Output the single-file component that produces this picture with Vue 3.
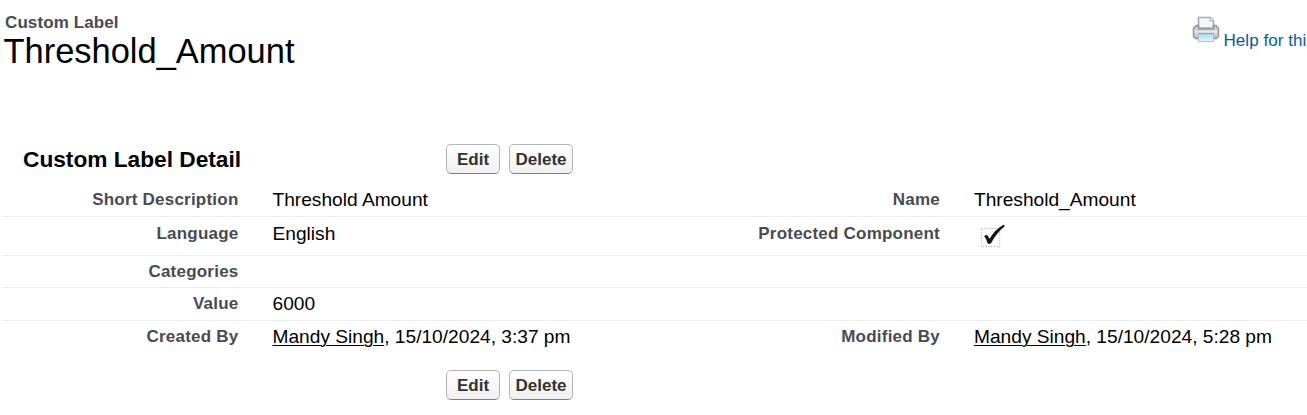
<script setup>
const rows = [
  { id: 'description', label: 'Short Description', value: 'Threshold Amount', label2: 'Name', value2: 'Threshold_Amount' },
  { id: 'language', label: 'Language', value: 'English', label2: 'Protected Component', checked: true },
  { id: 'categories', label: 'Categories' },
  { id: 'amount', label: 'Value', value: '6000' },
  { id: 'created', label: 'Created By', user: 'Mandy Singh', value: ', 15/10/2024, 3:37 pm', label2: 'Modified By', user2: 'Mandy Singh', value2: ', 15/10/2024, 5:28 pm' },
]
</script>

<template>
  <main class="page">
    <header class="header">
      <div>
        <div class="kind">Custom Label</div>
        <h1>Threshold_Amount</h1>
      </div>
      <div class="links">
        <svg class="printer" width="28" height="28" viewBox="0 0 28 28">
          <defs>
            <linearGradient id="paper" x1="0" y1="0" x2="0" y2="1">
              <stop offset="0" stop-color="#a3d6ef" />
              <stop offset="1" stop-color="#e6f8ff" />
            </linearGradient>
            <linearGradient id="body" x1="0" y1="0" x2="0" y2="1">
              <stop offset="0" stop-color="#c0c3c5" />
              <stop offset="0.5" stop-color="#dedfdf" />
              <stop offset="1" stop-color="#b5b7b9" />
            </linearGradient>
          </defs>
          <path d="M6.500 12V1.500h12l3 3V12z" fill="#f2f6fc" stroke="#a3abbd" stroke-width="1.600" />
          <path d="M18 1.500v3.500h3.500" fill="#fff" stroke="#a3abbd" />
          <path d="M4 9.500h2.500v3.500h15v-3.500H24l2.500 3v8l-2 2H3.500l-2-2v-8z" fill="url(#body)" stroke="#96989a" stroke-width="1.500" />
          <path d="M3 15.500h22" stroke="#e8e8e8" stroke-width="1.200" />
          <path d="M6.500 17.500h15v8h-15z" fill="url(#paper)" stroke="#b0bfca" />
          <path d="M6 17.500h16" stroke="#87a5b3" />
        </svg>
        <a>Help for thi</a>
      </div>
    </header>

    <section>
      <div class="bar top">
        <h2>Custom Label Detail</h2>
        <button>Edit</button>
        <button class="delete">Delete</button>
      </div>
      <div class="details">
        <div v-for="row in rows" :key="row.id" class="row" :class="row.id">
          <div class="label">{{ row.label }}</div>
          <div class="value"><a v-if="row.user">{{ row.user }}</a>{{ row.value }}</div>
          <div class="label">{{ row.label2 }}</div>
          <div class="value second">
            <svg v-if="row.checked" class="check" width="28" height="26" viewBox="0 0 28 26">
              <rect x="2.500" y="4.500" width="18" height="18" fill="none" stroke="#c4c4c4" stroke-width="1.300" stroke-dasharray="1.300 1.400" />
              <path d="M5.200 12.200Q7.500 9.800 9 12.300L10.600 14.700Q16 5.500 24.500 0.800L26 2Q17.500 9 12.300 18.700Q10 21.200 8.500 19Q7.400 14.500 5.200 12.200z" fill="#151515" />
            </svg>
            <template v-else><a v-if="row.user2">{{ row.user2 }}</a>{{ row.value2 }}</template>
          </div>
        </div>
      </div>
      <div class="bar bottom">
        <button>Edit</button>
        <button class="delete">Delete</button>
      </div>
    </section>
  </main>
</template>

<style>
body { margin: 0; background: #fff; }
</style>

<style scoped>
.page { width: 1307px; height: 415px; overflow: hidden; font-family: "Liberation Sans", Arial, sans-serif; color: #000; }
.header { height: 140px; display: flex; justify-content: space-between; padding-left: 4px; box-sizing: border-box; }
.kind { margin: 13px 0 0 1px; font-size: 17px; line-height: 20px; font-weight: bold; letter-spacing: 0.100px; color: #4a4a56; }
h1 { margin: -2px 0 0 -0.500px; font-size: 34.450px; line-height: 40px; font-weight: normal; }
.links { display: flex; width: 114px; padding-top: 16px; font-size: 17px; line-height: 20px; color: #015ba7; white-space: nowrap; }
.links a { margin: 15px 0 0 3.500px; letter-spacing: 0.050px; }
.printer { flex: none; margin-left: -1px; }
.bar { display: flex; align-items: center; box-sizing: border-box; }
.top { height: 43px; padding: 4px 0 9px 23px; }
h2 { width: 423px; margin: 0; font-size: 22.700px; line-height: 28px; font-weight: bold; }
button { box-sizing: border-box; width: 54px; height: 30px; padding: 1px 0 0; border: 1px solid #b5b5b5; border-bottom-color: #7f7f7f; border-radius: 5px; background: linear-gradient(#fff, #f0f0f0); color: #333; font: bold 17px/27px "Liberation Sans", Arial, sans-serif; }
.delete { width: 64px; margin-left: 9px; }
.details { padding-left: 3px; }
.row { display: grid; grid-template-columns: 235.500px 431px 270.500px 1fr; box-sizing: border-box; padding-top: 5px; border-bottom: 1px solid #ececec; line-height: 22px; }
.description { height: 34px; }
.language { height: 39px; }
.categories { height: 32px; }
.amount { height: 33px; }
.created { height: 33px; border: 0; }
.value { padding-left: 34px; font-size: 19.150px; white-space: nowrap; }
.description .value, .language .value { padding-top: 1px; }
.label { text-align: right; font-size: 17px; font-weight: bold; letter-spacing: 0.220px; color: #4a4a56; }
.description .label, .language .label { padding-top: 1px; }
.value a { text-decoration: underline; text-decoration-thickness: 1px; text-underline-offset: 2px; }
.check { display: block; margin: 1px 0 0 4.500px; }
.bottom { padding: 16px 0 0 446px; }
</style>
